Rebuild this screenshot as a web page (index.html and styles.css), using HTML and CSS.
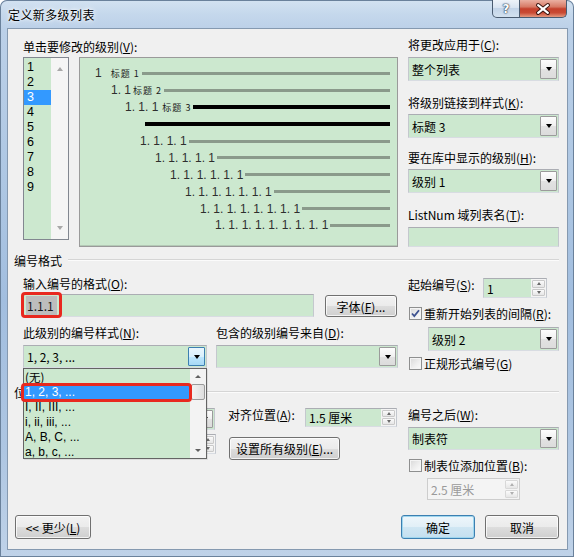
FILE: index.html
```html
<!DOCTYPE html>
<html lang="zh-CN">
<head>
<meta charset="utf-8">
<title>定义新多级列表</title>
<link rel="stylesheet" href="styles.css">
</head>
<body>
<div class="window">
  <div class="titlebar">
    <span class="title">定义新多级列表</span>
    <div class="caps">
      <span class="cap help">?</span>
      <span class="cap close">
        <svg width="47" height="18" viewBox="0 0 47 18"><path d="M18.5 5 L28.5 13 M28.5 5 L18.5 13" stroke="#3a1510" stroke-width="4.2" stroke-linecap="round" fill="none"/><path d="M18.5 5 L28.5 13 M28.5 5 L18.5 13" stroke="#ffffff" stroke-width="2.2" stroke-linecap="round" fill="none"/></svg>
      </span>
    </div>
  </div>

  <div class="client">
    <div class="top">
      <div class="top-left">
        <div class="lbl">单击要修改的级别(<u>V</u>):</div>
        <div class="top-row">
          <div class="levels">
            <div class="lv-items">
              <div class="lv">1</div><div class="lv">2</div><div class="lv sel">3</div>
              <div class="lv">4</div><div class="lv">5</div><div class="lv">6</div>
              <div class="lv">7</div><div class="lv">8</div><div class="lv">9</div>
            </div>
            <div class="lv-sb"><i class="tri-up light"></i><i class="tri-dn light"></i></div>
          </div>
          <div class="preview">
            <div class="pr r1"><span class="num">1</span><span class="cap1 c1">标题 1</span><i class="bar"></i></div>
            <div class="pr r2"><span class="num">1. 1</span><span class="cap1 c2">标题 2</span><i class="bar"></i></div>
            <div class="pr r3"><span class="num">1. 1. 1</span><span class="cap1 c3">标题 3</span><i class="bar blk"></i></div>
            <div class="pr r4"><i class="bar blk first"></i></div>
            <div class="pr r5"><span class="num">1. 1. 1. 1</span><i class="bar"></i></div>
            <div class="pr r6"><span class="num">1. 1. 1. 1. 1</span><i class="bar"></i></div>
            <div class="pr r7"><span class="num">1. 1. 1. 1. 1. 1</span><i class="bar"></i></div>
            <div class="pr r8"><span class="num">1. 1. 1. 1. 1. 1. 1</span><i class="bar"></i></div>
            <div class="pr r9"><span class="num">1. 1. 1. 1. 1. 1. 1. 1</span><i class="bar"></i></div>
            <div class="pr r10"><span class="num">1. 1. 1. 1. 1. 1. 1. 1. 1</span><i class="bar"></i></div>
          </div>
        </div>
      </div>
      <div class="top-right">
        <div class="lbl">将更改应用于(<u>C</u>):</div>
        <div class="combo c-apply"><span class="ctext">整个列表</span><span class="dbtn"><i class="tri-dn"></i></span></div>
        <div class="lbl l-link">将级别链接到样式(<u>K</u>):</div>
        <div class="combo c-link"><span class="ctext">标题 3</span><span class="dbtn"><i class="tri-dn"></i></span></div>
        <div class="lbl l-gal">要在库中显示的级别(<u>H</u>):</div>
        <div class="combo c-gal"><span class="ctext">级别 1</span><span class="dbtn"><i class="tri-dn"></i></span></div>
        <div class="lbl l-ln">ListNum 域列表名(<u>T</u>):</div>
        <div class="field f-ln"></div>
      </div>
    </div>

    <div class="ghead g1"><span>编号格式</span><i></i></div>

    <div class="secb">
      <div class="b-left">
        <div class="lbl l-fmt">输入编号的格式(<u>O</u>):</div>
        <div class="row r-fmt">
          <div class="field f-fmt"><span class="shade">1.1.1</span></div>
          <div class="btn b-font">字体(<u>F</u>)...</div>
        </div>
        <div class="row r-lbls">
          <div class="lbl l-style">此级别的编号样式(<u>N</u>):</div>
          <div class="lbl">包含的级别编号来自(<u>D</u>):</div>
        </div>
        <div class="row r-combos">
          <div class="combo c-style"><span class="ctext">1, 2, 3, ...</span><span class="dbtn hot"><i class="tri-dn"></i></span></div>
          <div class="combo c-incl"><span class="ctext"></span><span class="dbtn"><i class="tri-dn"></i></span></div>
        </div>
      </div>
      <div class="b-right">
        <div class="row r-start">
          <div class="lbl l-start">起始编号(<u>S</u>):</div>
          <div class="spin s-start"><span class="sval">1</span><span class="sarr"><b><i class="tri-up sm"></i></b><b><i class="tri-dn sm"></i></b></span></div>
        </div>
        <div class="chk k-restart"><span class="box on"><svg width="11" height="11" viewBox="0 0 11 11"><path d="M2 5.5 L4.3 8 L9 2.2" stroke="#3d5290" stroke-width="1.8" fill="none"/></svg></span><span>重新开始列表的间隔(<u>R</u>):</span></div>
        <div class="combo c-lvl2"><span class="ctext">级别 2</span><span class="dbtn"><i class="tri-dn"></i></span></div>
        <div class="chk k-legal"><span class="box"></span><span>正规形式编号(<u>G</u>)</span></div>
      </div>
    </div>

    <div class="ghead g2"><span>位置</span><i></i></div>

    <div class="secc">
      <div class="c-col1">
        <div class="row r-align">
          <div class="spacer"></div>
          <div class="combo c-left"><span class="ctext"></span><span class="dbtn"><i class="tri-dn"></i></span></div>
        </div>
        <div class="row r-indent">
          <div class="spacer"></div>
          <div class="spin s-indent"><span class="sval"></span><span class="sarr"><b><i class="tri-up sm"></i></b><b><i class="tri-dn sm"></i></b></span></div>
        </div>
      </div>
      <div class="c-col2">
        <div class="row r-at">
          <div class="lbl l-at">对齐位置(<u>A</u>):</div>
          <div class="spin s-at"><span class="sval">1.5 厘米</span><span class="sarr"><b><i class="tri-up sm"></i></b><b><i class="tri-dn sm"></i></b></span></div>
        </div>
        <div class="btn b-all">设置所有级别(<u>E</u>)...</div>
      </div>
      <div class="c-col3">
        <div class="lbl l-after">编号之后(<u>W</u>):</div>
        <div class="combo c-after"><span class="ctext">制表符</span><span class="dbtn"><i class="tri-dn"></i></span></div>
        <div class="chk k-tab"><span class="box"></span><span>制表位添加位置(<u>B</u>):</span></div>
        <div class="spin s-tab dis"><span class="sval">2.5 厘米</span><span class="sarr"><b><i class="tri-up sm"></i></b><b><i class="tri-dn sm"></i></b></span></div>
      </div>
    </div>

    <div class="bottom">
      <div class="btn b-less">&lt;&lt; 更少(<u>L</u>)</div>
      <div class="btn b-ok default">确定</div>
      <div class="btn b-cancel">取消</div>
    </div>

    <div class="dd">
      <div class="dd-items">
        <div class="dd-it"><span class="cjk">(无)</span></div>
        <div class="dd-it sel">1, 2, 3, ...</div>
        <div class="dd-it">I, II, III, ...</div>
        <div class="dd-it">i, ii, iii, ...</div>
        <div class="dd-it">A, B, C, ...</div>
        <div class="dd-it">a, b, c, ...</div>
      </div>
      <div class="dd-sb">
        <span class="sb-btn"><i class="tri-up"></i></span>
        <span class="sb-thumb"></span>
        <span class="sb-track"></span>
        <span class="sb-btn"><i class="tri-dn"></i></span>
      </div>
    </div>

    <div class="mark m1"></div>
    <div class="mark m2"></div>
  </div>
</div>
</body>
</html>
```

FILE: styles.css
```css
* { box-sizing: border-box; }
body {
  margin: 0;
  width: 574px;
  height: 557px;
  overflow: hidden;
  background: #ffffff;
  font-family: "Noto Sans CJK SC", "Noto Sans", sans-serif;
  font-size: 12px;
  color: #000;
}
u { text-decoration: underline; text-underline-offset: 1px; }
i { display: block; font-style: normal; }

.window {
  width: 574px;
  height: 557px;
  border-radius: 7px 7px 0 0;
  background: linear-gradient(180deg, #d3e2f1 0px, #c5d8ec 14px, #bbd0e8 30px, #aec7e3 180px, #a2bedf 300px, #aec6e2 450px, #bfd2e8 557px);
  box-shadow: inset 0 0 0 1px #6a819b;
  display: flex;
  flex-direction: column;
}

.titlebar {
  height: 29px;
  display: flex;
  align-items: flex-start;
  padding: 0 7px 0 8px;
}
.title {
  line-height: 30px;
  font-size: 12px;
  letter-spacing: 0.4px;
  text-shadow: 0 0 6px #ffffff, 0 0 3px #ffffff;
}
.caps { margin-left: auto; display: flex; }
.cap {
  height: 18px;
  border: 1px solid #4a5b70;
  border-top: none;
  display: flex;
  align-items: center;
  justify-content: center;
}
.help {
  width: 28px;
  border-radius: 0 0 0 5px;
  background: linear-gradient(180deg, #eef3f9 0%, #d9e4f1 45%, #c3d4e8 50%, #d3e1ef 100%);
  color: #ffffff;
  font-family: "DejaVu Sans", sans-serif;
  font-weight: bold;
  font-size: 12px;
  text-shadow: 0 0 1px #2c3f57, 0 0 1px #2c3f57, 0 0 2px #2c3f57;
}
.close {
  width: 47px;
  border-left: none;
  border-radius: 0 0 5px 0;
  background: linear-gradient(180deg, #eab0a2 0%, #d77a66 40%, #c4402c 52%, #c94a34 75%, #e59a80 100%);
}

.client {
  position: relative;
  margin-left: 8px;
  width: 559px;
  height: 520px;
  background: #f0f0f0;
  box-shadow: 0 0 0 1px #8599b0;
  padding-top: 8px;
}

.lbl { height: 16px; line-height: 16px; white-space: nowrap; }
.row { display: flex; align-items: flex-start; }

.field, .combo, .spin {
  background: #cce8cf;
  border: 1px solid #abadb3;
  border-left-color: #c4c8ce;
  border-right-color: #c4c8ce;
  border-bottom-color: #d8dce2;
}
.combo { display: flex; align-items: stretch; }
.ctext { flex: 1; padding-left: 3px; display: flex; align-items: center; white-space: nowrap; overflow: hidden; }
.dbtn {
  width: 17px;
  margin: 1px;
  border: 1px solid #9b9b9b;
  border-radius: 1px;
  background: linear-gradient(180deg, #fdfdfd 0%, #f0f0f0 50%, #e2e2e2 51%, #dcdcdc 100%);
  display: flex;
  align-items: center;
  justify-content: center;
}
.dbtn.hot {
  border-color: #3c7fb1;
  background: linear-gradient(180deg, #eaf6fd 0%, #d9f0fc 50%, #bee6fd 51%, #a7d9f5 100%);
}
.tri-dn { width: 0; height: 0; border-left: 3.5px solid transparent; border-right: 3.5px solid transparent; border-top: 4px solid #000; }
.tri-up { width: 0; height: 0; border-left: 3.5px solid transparent; border-right: 3.5px solid transparent; border-bottom: 4px solid #000; }
.tri-up.light { border-bottom-color: #a8a8a8; }
.tri-dn.light { border-top-color: #a8a8a8; }
.tri-up.sm { border-left-width: 2.5px; border-right-width: 2.5px; border-bottom: 3px solid #6a6a6a; }
.tri-dn.sm { border-left-width: 2.5px; border-right-width: 2.5px; border-top: 3px solid #6a6a6a; }

.spin { display: flex; align-items: stretch; }
.sval { flex: 1; padding-left: 3px; display: flex; align-items: center; white-space: nowrap; }
.sarr { width: 15px; display: flex; flex-direction: column; background: #f4f4f4; padding: 1px; gap: 1px; }
.sarr b {
  flex: 1;
  border: 1px solid #c9c9c9;
  border-radius: 1px;
  background: linear-gradient(180deg, #fbfbfb, #e6e6e6);
  display: flex;
  align-items: center;
  justify-content: center;
}
.spin.dis { background: #f4f4f4; border-color: #cdcdcd; color: #9a9a9a; }
.spin.dis .sarr b { border-color: #d8d8d8; }
.spin.dis .tri-up.sm { border-bottom-color: #b0b0b0; }
.spin.dis .tri-dn.sm { border-top-color: #b0b0b0; }

.btn {
  border: 1px solid #707070;
  border-radius: 3px;
  background: linear-gradient(180deg, #f2f2f2 0%, #ebebeb 50%, #dddddd 51%, #cfcfcf 100%);
  box-shadow: inset 0 0 0 1px rgba(255, 255, 255, 0.75);
  display: flex;
  align-items: center;
  justify-content: center;
  white-space: nowrap;
}
.btn.default {
  border-color: #3c7fb1;
  background: linear-gradient(180deg, #eef6fb 0%, #e1eff7 50%, #cfe6f3 51%, #c4dfef 100%);
  box-shadow: inset 0 0 0 1px #9fd6ee;
}

.chk { display: flex; align-items: center; height: 16px; white-space: nowrap; }
.box {
  width: 13px;
  height: 13px;
  margin-left: 1px;
  margin-right: 2px;
  border: 1px solid #8e8f8f;
  background: linear-gradient(135deg, #d8d8d8 0%, #f0f0f0 60%, #fbfbfb 100%);
  box-shadow: inset 0 0 0 1px #f4f4f4;
  display: flex;
  align-items: center;
  justify-content: center;
}

.top { display: flex; align-items: flex-start; }
.top-left { margin-left: 15px; margin-top: 2px; }
.top-row { display: flex; margin-top: 2px; gap: 10px; align-items: flex-start; }
.levels {
  width: 46px;
  height: 183px;
  border: 1px solid #828790;
  display: flex;
  background: #f5f5f5;
}
.lv-items { width: 27px; background: #cce8cf; padding-top: 2px; }
.lv {
  height: 15px;
  line-height: 15px;
  padding-left: 3px;
  font-family: "Liberation Sans", sans-serif;
  font-size: 12.5px;
}
.lv.sel { background: #3399ff; color: #ffffff; }
.lv-sb { flex: 1; display: flex; flex-direction: column; justify-content: space-between; align-items: center; padding: 9px 0 9px; }

.preview {
  width: 319px;
  height: 190px;
  border: 1px solid #9a9a9a;
  background: #cce8cf;
  box-shadow: inset 0 -3px 0 -2px #b4c9b6;
  padding-top: 7px;
}
.pr { height: 16.9px; display: flex; align-items: center; }
.num {
  font-family: "Liberation Sans", sans-serif;
  font-size: 12px;
  color: #2e2e2e;
  white-space: pre;
}
.cap1 { font-size: 9px; line-height: 11px; letter-spacing: 1px; white-space: nowrap; color: #1a1a1a; }
.c1 { margin-left: 9px; }
.c2 { margin-left: 2px; }
.c3 { margin-left: 4px; }
.bar { flex: 1; height: 3px; background: #8a9a8b; margin: 0 7px 0 2px; }
.bar.blk { height: 4px; background: #000; }
.bar.first { margin-left: 0; }
.r1 { padding-left: 15px; }
.r2 { padding-left: 31px; }
.r3 { padding-left: 45px; }
.r4 { padding-left: 65px; }
.r5 { padding-left: 60px; }
.r6 { padding-left: 75px; }
.r7 { padding-left: 90px; }
.r8 { padding-left: 105px; }
.r9 { padding-left: 120px; }
.r10 { padding-left: 135px; }

.top-right { margin-left: 10px; width: 151px; }
.top-right .combo { height: 24px; }
.c-apply { margin-top: 4px; }
.l-link { margin-top: 14px; }
.c-link { margin-top: 3px; }
.l-gal { margin-top: 12px; }
.c-gal { margin-top: 3px; }
.l-ln { margin-top: 14px; }
.f-ln { margin-top: 4px; height: 20px; }

.ghead { display: flex; align-items: center; height: 16px; margin-left: 6px; }
.ghead span { white-space: nowrap; }
.ghead i { flex: 1; height: 2px; border-top: 1px solid #d5d5d5; border-bottom: 1px solid #fbfbfb; margin: 0 8px 0 6px; }
.g1 { margin-top: 5px; }
.g2 { margin-top: 13px; }

.secb { display: flex; align-items: flex-start; }
.b-left { margin-left: 15px; width: 375px; }
.l-fmt { margin-top: 8px; }
.r-fmt { margin-top: 2px; }
.f-fmt { width: 291px; height: 23px; padding-left: 2px; display: flex; align-items: center; }
.shade {
  background: #bdbdbd;
  height: 19px;
  line-height: 19px;
  padding: 0 3px 0 1px;
  font-size: 12px;
  color: #1a1a1a;
}
.b-font { width: 72px; height: 22px; margin-left: 11px; margin-top: 1px; }
.r-lbls { margin-top: 8px; }
.l-style { width: 193px; }
.r-combos { margin-top: 4px; }
.r-combos .combo { height: 23px; }
.c-style { width: 184px; }
.c-incl { width: 182px; margin-left: 9px; }

.b-right { margin-left: 10px; width: 151px; }
.r-start { margin-top: 10px; }
.l-start { width: 75px; margin-top: -1px; }
.s-start { width: 64px; height: 20px; }
.k-restart { margin-top: 7px; }
.c-lvl2 { margin-top: 6px; margin-left: 20px; width: 131px; height: 24px; }
.k-legal { margin-top: 4px; }

.secc { display: flex; align-items: flex-start; }
.c-col1 { margin-left: 15px; width: 193px; }
.spacer { width: 96px; height: 16px; }
.r-align { margin-top: 8px; }
.c-left { width: 96px; height: 22px; }
.r-indent { margin-top: 4px; }
.s-indent { width: 97px; height: 20px; }

.c-col2 { margin-left: 12px; width: 169px; }
.r-at { margin-top: 8px; }
.l-at { width: 77px; margin-top: -1px; }
.s-at { width: 92px; height: 19px; }
.b-all { width: 111px; height: 23px; margin-top: 10px; margin-left: 1px; }

.c-col3 { margin-left: 11px; width: 151px; }
.l-after { margin-top: 7px; }
.c-after { margin-top: 4px; height: 23px; }
.k-tab { margin-top: 7px; }
.s-tab { margin-top: 5px; margin-left: 19px; width: 93px; height: 22px; }

.bottom { display: flex; margin-top: 15px; padding: 0 8px 0 7px; }
.bottom .btn { height: 24px; }
.b-less { width: 76px; }
.b-ok { width: 74px; margin-left: auto; }
.b-cancel { width: 74px; margin-left: 10px; }

.dd {
  position: absolute;
  left: 15px;
  top: 339px;
  width: 184px;
  height: 91px;
  border: 1px solid #646464;
  background: #cce8cf;
  display: flex;
  box-shadow: 1px 1px 0 rgba(0, 0, 0, 0.08);
}
.dd-items { flex: 1; padding-top: 1px; }
.dd-it {
  height: 15px;
  line-height: 15px;
  padding-left: 1px;
  white-space: nowrap;
  font-family: "Liberation Sans", sans-serif;
  font-size: 12px;
}
.dd-it .cjk { font-family: "Noto Sans CJK SC", sans-serif; font-size: 11.5px; line-height: 13px; display: inline-block; vertical-align: top; margin-top: 1px; }
.dd-it.sel { background: #3399ff; color: #ffffff; }
.dd-sb { width: 16px; background: #f3f3f3; display: flex; flex-direction: column; }
.sb-btn { height: 15px; display: flex; align-items: center; justify-content: center; }
.sb-btn .tri-up { border-bottom-color: #606060; border-left-width: 3px; border-right-width: 3px; border-bottom-width: 3px; }
.sb-btn .tri-dn { border-top-color: #606060; border-left-width: 3px; border-right-width: 3px; border-top-width: 3px; }
.sb-thumb {
  height: 16px;
  margin: 0 1px;
  border: 1px solid #9a9a9a;
  border-radius: 2px;
  background: linear-gradient(90deg, #f2f2f2, #dedede);
}
.sb-track { flex: 1; }

.mark {
  position: absolute;
  border: 3px solid #e8291f;
  border-radius: 4px;
}
.m1 { left: 13px; top: 263px; width: 41px; height: 26px; }
.m2 { left: 13px; top: 354px; width: 171px; height: 19px; }
```
